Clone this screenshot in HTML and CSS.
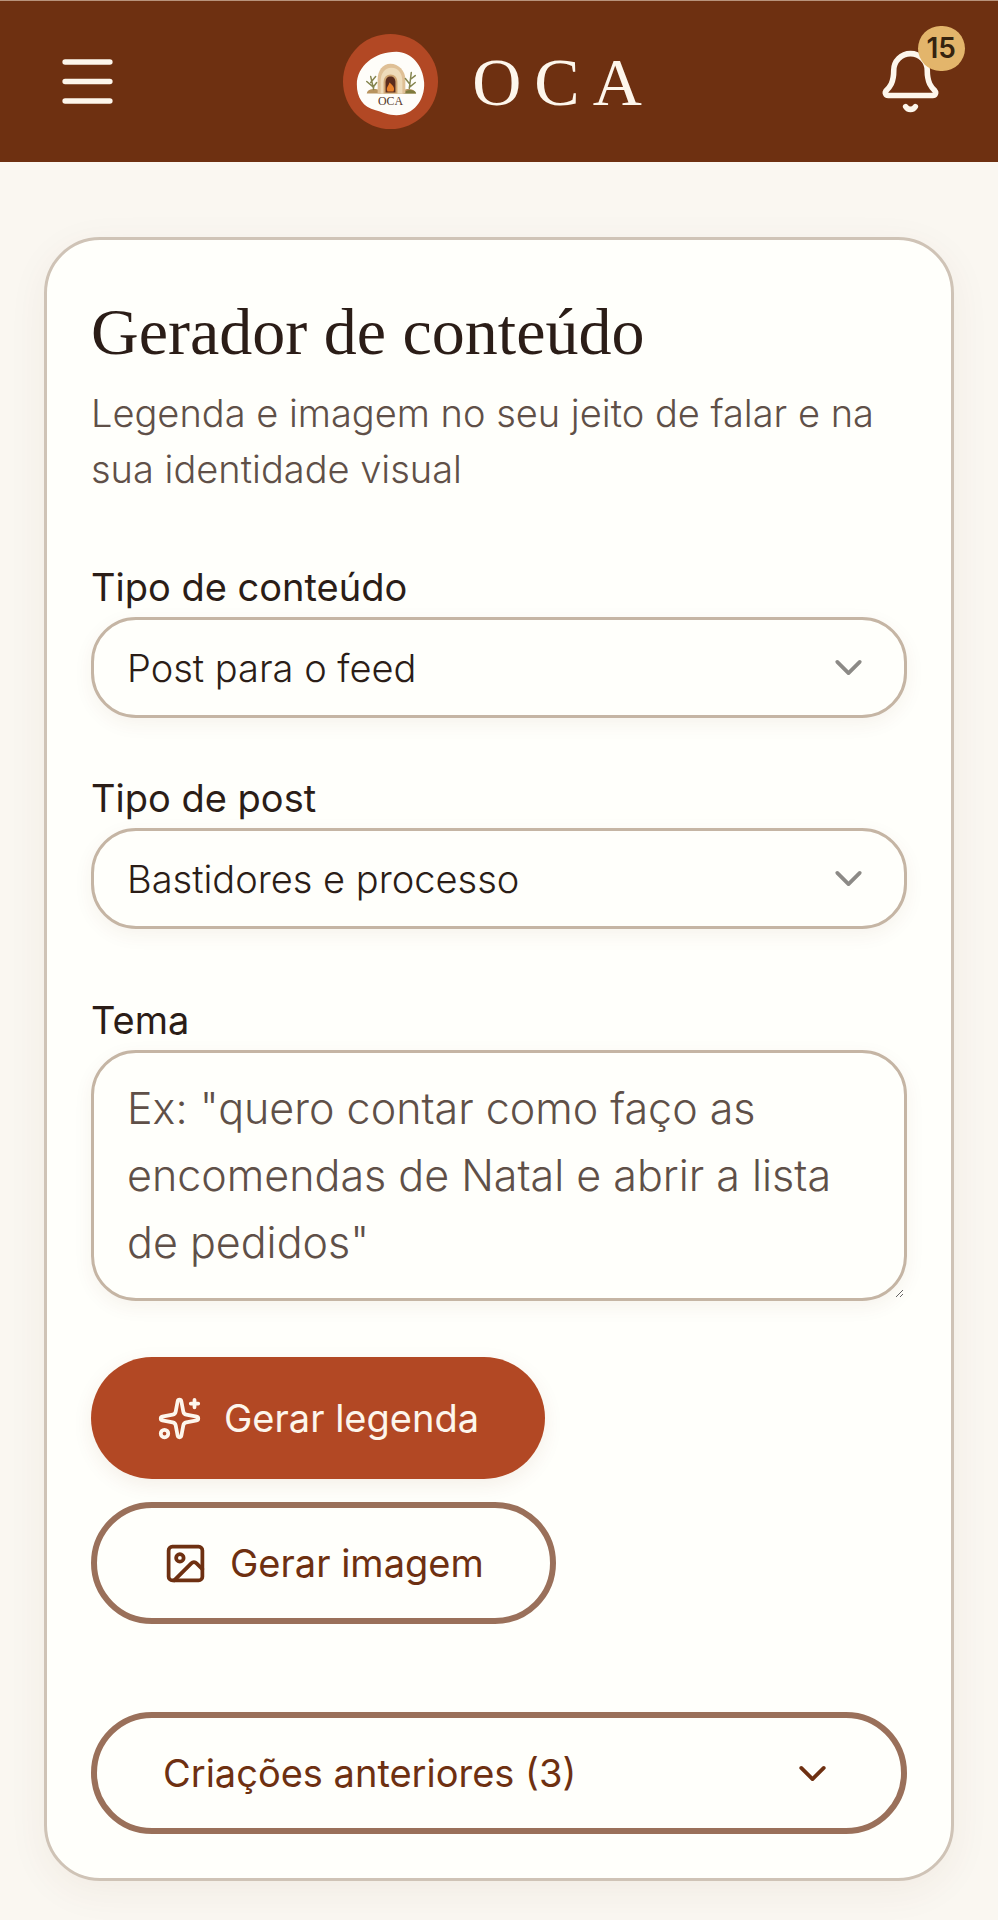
FILE: index.html
```html
<!DOCTYPE html>
<html lang="pt-BR">
<head>
  <meta charset="UTF-8">
  <meta name="viewport" content="width=device-width, initial-scale=1.0">
  <title>OCA - Gerador de conteúdo</title>
  <link rel="stylesheet" href="styles.css">
</head>
<body>
  <header class="topbar">
    <button class="icon-btn" type="button" aria-label="Abrir menu">
      <svg viewBox="0 0 24 24"><path d="M4 5h16M4 12h16M4 19h16"/></svg>
    </button>

    <a class="brand" href="#">
      <svg class="brand-logo" viewBox="0 0 96 96" aria-hidden="true">
        <circle cx="48" cy="48" r="48" fill="#b24824"/>
        <path d="M54 18c15 0 27 14 28 31 1 18-11 33-28 33-8 0-14-3-21-5-13-3-19-13-19-26 0-18 17-33 40-33z" fill="#fefdf9"/>
        <!-- grass and bushes -->
        <path d="M24 60c1-4 6-5 11-4h28c5-1 9 0 11 4z" fill="#b8935e"/>
        <path d="M61 60c2-4 11-5 13 0z" fill="#7d7a3c"/>
        <!-- oven -->
        <path d="M35 60V46c0-9 5-16 13-16s15 7 15 16v14z" fill="#dfc096"/>
        <path d="M38 60V48c0-8 4-14 11-14s11 6 11 14v12z" fill="#eedbba"/>
        <path d="M41 60V49c0-5 3-8 7-8s7 3 7 8v11z" fill="#d0a673"/>
        <path d="M43 59V49c0-4 2-6 5-6s5 2 5 6v10z" fill="#5b2c1d"/>
        <path d="M45 58c-2-4 1-5 2-9 3 3 6 5 4 9z" fill="#e9822c"/>
        <!-- leaves -->
        <g class="leaves">
          <path d="M31 56l-3-13M31 54l-7-6M28 49l5-6M31 53l3-4M67 55l2-16M67 50l-4-5M68 46l5-4M67 54l6-5"/>
        </g>
        <text x="48" y="72" class="logo-text">OCA</text>
      </svg>
      <span class="brand-name">OCA</span>
    </a>

    <button class="icon-btn" type="button" aria-label="Notificações">
      <svg viewBox="0 0 24 24">
        <path d="M10.268 21a2 2 0 0 0 3.464 0"/>
        <path d="M3.262 15.326A1 1 0 0 0 4 17h16a1 1 0 0 0 .74-1.673C19.41 13.956 18 12.499 18 8A6 6 0 0 0 6 8c0 4.499-1.411 5.956-2.738 7.326"/>
      </svg>
      <span class="badge">15</span>
    </button>
  </header>

  <main class="page">
    <form class="card">
      <h1>Gerador de conteúdo</h1>
      <p class="subtitle">Legenda e imagem no seu jeito de falar e na sua identidade visual</p>

      <div class="field">
        <label for="tipoConteudo">Tipo de conteúdo</label>
        <div class="select-wrap">
          <select id="tipoConteudo">
            <option>Post para o feed</option>
          </select>
          <svg class="icon" viewBox="0 0 24 24"><path d="m6 9 6 6 6-6"/></svg>
        </div>
      </div>

      <div class="field">
        <label for="tipoPost">Tipo de post</label>
        <div class="select-wrap">
          <select id="tipoPost">
            <option>Bastidores e processo</option>
          </select>
          <svg class="icon" viewBox="0 0 24 24"><path d="m6 9 6 6 6-6"/></svg>
        </div>
      </div>

      <div class="field field-tema">
        <label for="tema">Tema</label>
        <textarea id="tema" rows="3" placeholder="Ex: &quot;quero contar como faço as encomendas de Natal e abrir a lista de pedidos&quot;"></textarea>
      </div>

      <div class="actions">
        <button class="btn btn-primary" type="button">
          <svg class="icon" viewBox="0 0 24 24">
            <path d="M11.017 2.814a1 1 0 0 1 1.966 0l1.051 5.558a2 2 0 0 0 1.594 1.594l5.558 1.051a1 1 0 0 1 0 1.966l-5.558 1.051a2 2 0 0 0-1.594 1.594l-1.051 5.558a1 1 0 0 1-1.966 0l-1.051-5.558a2 2 0 0 0-1.594-1.594l-5.558-1.051a1 1 0 0 1 0-1.966l5.558-1.051a2 2 0 0 0 1.594-1.594z"/>
            <path d="M20 2v4M22 4h-4"/>
            <circle cx="4" cy="20" r="2"/>
          </svg>
          Gerar legenda
        </button>
        <button class="btn btn-outline" type="button">
          <svg class="icon" viewBox="0 0 24 24">
            <rect x="3" y="3" width="18" height="18" rx="2"/>
            <circle cx="9" cy="9" r="2"/>
            <path d="m21 15-3.086-3.086a2 2 0 0 0-2.828 0L6 21"/>
          </svg>
          Gerar imagem
        </button>
      </div>

      <button class="btn btn-outline btn-history" type="button" aria-expanded="false">
        Criações anteriores (3)
        <svg class="icon" viewBox="0 0 24 24"><path d="m6 9 6 6 6-6"/></svg>
      </button>
    </form>
  </main>
</body>
</html>
```

FILE: styles.css
```css
:root {
  --bg: #faf7f1;
  --card: #fffffb;
  --brown: #6e3011;
  --terracotta: #b24824;
  --cream: #fdf6ec;
  --text: #2b1d17;
  --muted: #5f5048;
  --border: #c5b5a4;
}

* {
  box-sizing: border-box;
}

body {
  margin: 0;
  font-family: Inter, "Liberation Sans", sans-serif;
  font-size: 38px;
  color: var(--text);
  background: var(--bg);
}

button, select, textarea {
  font: inherit;
  color: inherit;
}

svg {
  fill: none;
  stroke: currentColor;
  stroke-width: 2;
  stroke-linecap: round;
  stroke-linejoin: round;
}

/* header */
.topbar {
  display: flex;
  align-items: center;
  justify-content: space-between;
  height: 162px;
  padding: 0 54px;
  background: var(--brown);
  border-top: 1px solid #b8937c;
  color: var(--cream);
}

.icon-btn {
  position: relative;
  padding: 0;
  border: none;
  background: none;
  cursor: pointer;
}

.icon-btn svg {
  display: block;
  width: 67px;
  height: 67px;
}

.badge {
  position: absolute;
  top: -22px;
  right: -21px;
  padding: 0 9px;
  border-radius: 24px;
  background: #e3b56b;
  color: #35230f;
  font-size: 28px;
  font-weight: 600;
  line-height: 45px;
}

.brand {
  display: flex;
  align-items: center;
  gap: 34px;
  color: inherit;
  text-decoration: none;
}

.brand-logo {
  width: 95px;
  height: 95px;
  stroke: none;
}

.leaves {
  stroke: #85854f;
  stroke-width: 1.5;
}

.logo-text {
  fill: #55382a;
  font-family: "Liberation Serif", serif;
  font-size: 12px;
  text-anchor: middle;
}

.brand-name {
  font-family: "Liberation Serif", serif;
  font-size: 68px;
  line-height: 80px;
  letter-spacing: 13px;
}

/* card */
.page {
  padding: 75px 44px 39px;
}

.card {
  padding: 48px 44px 44px;
  border: 3px solid #cfc3b6;
  border-radius: 56px;
  background: var(--card);
  box-shadow: 0 10px 40px rgba(110, 48, 17, 0.06);
}

h1 {
  margin: 0;
  font-family: "Liberation Serif", serif;
  font-size: 66px;
  font-weight: 400;
  line-height: 88px;
}

.subtitle {
  margin: 9px 0 0;
  color: var(--muted);
  font-weight: 300;
  line-height: 56px;
}

/* form fields */
.field {
  display: flex;
  flex-direction: column;
  margin-top: 50px;
}

.subtitle + .field {
  margin-top: 60px;
}

.field label {
  line-height: 60px;
}

.field-tema {
  margin-top: 61px;
}

.select-wrap {
  position: relative;
}

select, textarea {
  display: block;
  width: 100%;
  border: 3px solid var(--border);
  border-radius: 45px;
  background: var(--card);
  box-shadow: 0 6px 20px rgba(110, 48, 17, 0.06);
  font-weight: 300;
}

select {
  height: 101px;
  padding: 0 90px 0 33px;
  appearance: none;
}

.icon {
  width: 45px;
  height: 45px;
  flex: none;
}

.select-wrap .icon {
  position: absolute;
  top: 28px;
  right: 36px;
  color: #8c8a86;
  pointer-events: none;
}

textarea {
  padding: 22px 33px;
  font-size: 43px;
  line-height: 67px;
}

textarea::placeholder {
  color: var(--muted);
  opacity: 1;
}

/* buttons */
.actions {
  display: flex;
  flex-wrap: wrap;
  gap: 23px;
  margin-top: 56px;
}

.btn {
  display: flex;
  align-items: center;
  gap: 22px;
  height: 122px;
  padding: 0 66px;
  border: none;
  border-radius: 61px;
  cursor: pointer;
}

.btn-primary {
  background: var(--terracotta);
  color: var(--cream);
  box-shadow: 0 6px 20px rgba(110, 48, 17, 0.08);
}

.btn-outline {
  border: 6px solid #9a705a;
  background: var(--card);
  color: var(--brown);
}

.btn-history {
  justify-content: space-between;
  width: 100%;
  margin-top: 88px;
}
```
